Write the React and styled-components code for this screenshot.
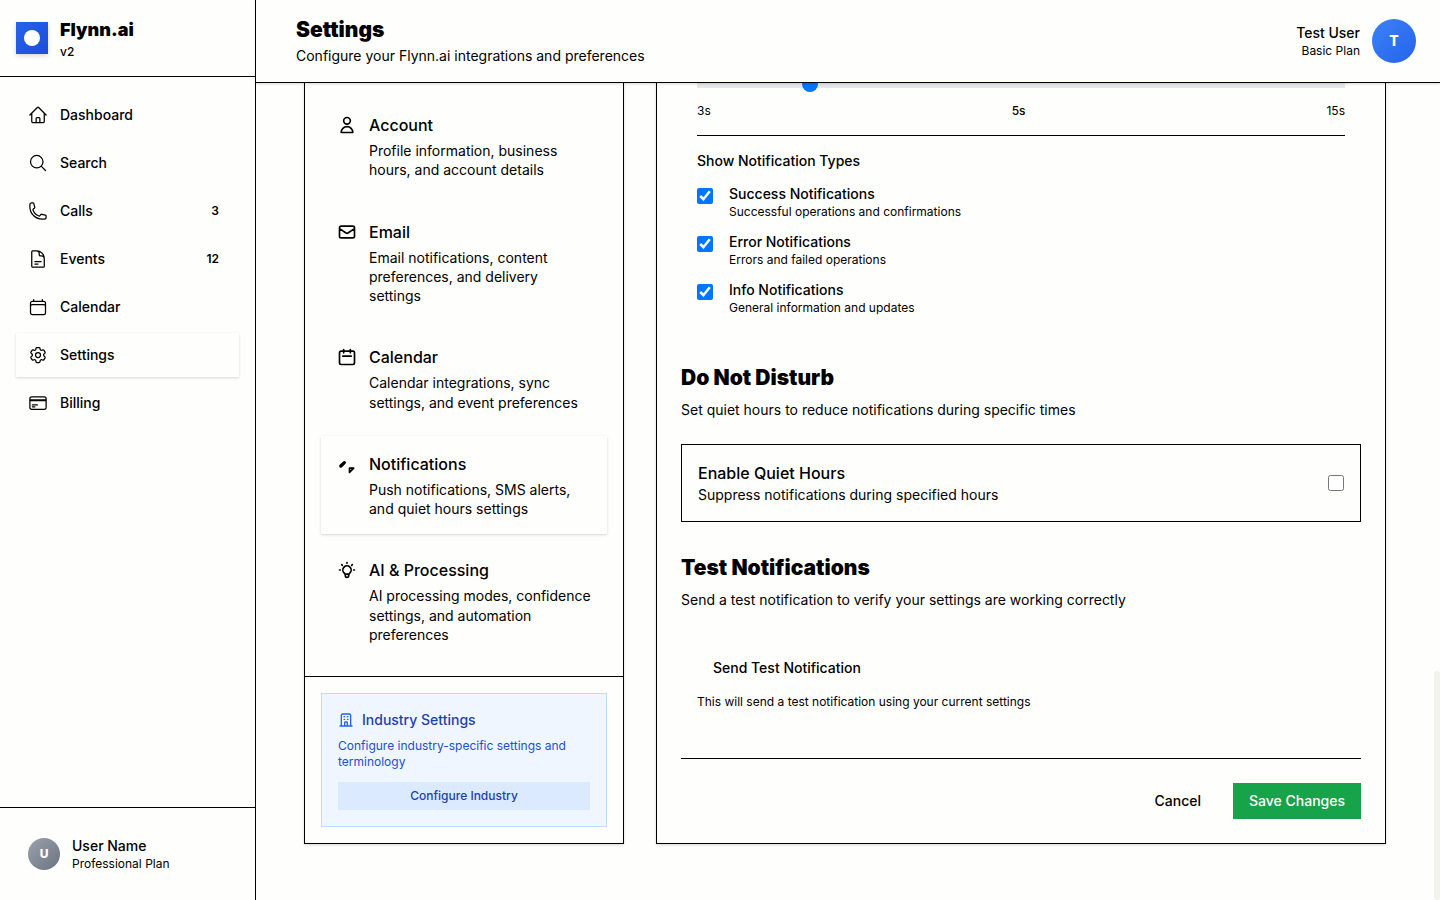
import React from 'react';
import styled, { createGlobalStyle, css } from 'styled-components';
import {
  HiOutlineHome,
  HiOutlineMagnifyingGlass,
  HiOutlinePhone,
  HiOutlineDocumentText,
  HiOutlineCalendar,
  HiOutlineCog6Tooth,
  HiOutlineCreditCard,
} from 'react-icons/hi2';

const GlobalStyle = createGlobalStyle`
  *, *::before, *::after { box-sizing: border-box; }
  body {
    margin: 0;
    background: #fefefc;
    color: #000;
    font-family: Inter, "Liberation Sans", sans-serif;
    font-size: 14px;
    line-height: 20px;
    -webkit-font-smoothing: antialiased;
  }
  h1, h2, h3, p, ul { margin: 0; padding: 0; }
  ul { list-style: none; }
  button { font: inherit; color: inherit; border: 0; background: none; cursor: pointer; }
  a { color: inherit; text-decoration: none; }
`;

const softShadow = css`
  box-shadow: 0 1px 3px rgba(0, 0, 0, 0.1), 0 1px 2px rgba(0, 0, 0, 0.06);
`;

const Shell = styled.div`
  display: flex;
  height: 100vh;
  overflow: hidden;
`;

const Sidebar = styled.aside`
  display: flex;
  flex-direction: column;
  flex: none;
  width: 256px;
  border-right: 1px solid #000;
`;

const Brand = styled.div`
  display: flex;
  align-items: center;
  gap: 12px;
  padding: 16px;
  border-bottom: 1px solid #000;
`;

const Logo = styled.div`
  display: grid;
  place-items: center;
  width: 32px;
  height: 32px;
  background: linear-gradient(135deg, #2563eb, #1d4ed8);
  box-shadow: 0 2px 5px rgba(0, 0, 0, 0.15);

  &::after {
    content: '';
    width: 16px;
    height: 16px;
    border-radius: 50%;
    background: #fff;
  }
`;

const Heading = styled.h2`
  font-size: 21px;
  line-height: 28px;
  font-weight: 900;
`;

const BrandName = styled.div`
  font-size: 18px;
  line-height: 28px;
  font-weight: 900;
`;

const Version = styled.div`
  font-size: 12px;
  line-height: 16px;
  font-weight: 500;
`;

const MainNav = styled.nav`
  flex: 1;
  padding: 16px;

  ul {
    display: flex;
    flex-direction: column;
    gap: 4px;
  }
`;

const NavLink = styled.a`
  display: flex;
  align-items: center;
  gap: 12px;
  height: 44px;
  padding: 0 12px;
  font-weight: 500;
  ${(p) => p.$active && softShadow}

  svg {
    width: 20px;
    height: 20px;
  }
`;

const Count = styled.span`
  margin-left: auto;
  padding: 0 8px;
  font-size: 12px;
  line-height: 16px;
  font-weight: 600;
`;

const SidebarFooter = styled.div`
  padding: 16px;
  border-top: 1px solid #000;
`;

const Profile = styled.div`
  display: flex;
  align-items: center;
  gap: 12px;
  padding: ${(p) => (p.$end ? '0' : '12px')};
  text-align: ${(p) => (p.$end ? 'right' : 'left')};
`;

const Avatar = styled.div`
  display: grid;
  place-items: center;
  flex: none;
  width: ${(p) => p.$size}px;
  height: ${(p) => p.$size}px;
  border-radius: 50%;
  background: ${(p) => p.$fill};
  color: #fff;
  font-size: ${(p) => p.$text}px;
  font-weight: 800;
`;

const Strong = styled.div`
  font-weight: 500;
`;

const Small = styled.div`
  font-size: 12px;
  line-height: 16px;
`;

const Page = styled.div`
  display: flex;
  flex-direction: column;
  flex: 1;
  min-width: 0;
`;

const TopBar = styled.header`
  position: relative;
  z-index: 1;
  display: flex;
  align-items: center;
  justify-content: space-between;
  flex: none;
  padding: 16px 24px 16px 40px;
  background: #fefefc;
  border-bottom: 1px solid #000;
  ${softShadow}

  p { margin-top: 2px; }
`;

const Scroller = styled.div`
  display: flex;
  flex: 1;
  min-height: 0;
`;

const ScrollTrack = styled.div`
  display: flex;
  align-items: flex-end;
  flex: none;
  width: 6px;
`;

const ScrollThumb = styled.div`
  width: 100%;
  height: 28%;
  border-radius: 3px;
  background: #f3f3ed;
`;

const Content = styled.main`
  display: flex;
  align-items: flex-start;
  gap: 32px;
  flex: 1;
  min-width: 0;
  padding: 0 48px 56px;
`;

const Card = styled.section`
  border: 1px solid #000;
  border-top: 0;
  ${softShadow}
`;

const MenuCard = styled(Card)`
  flex: none;
  width: 320px;
`;

const Menu = styled.ul`
  display: flex;
  flex-direction: column;
  gap: 8px;
  padding: 14px 16px 16px;
`;

const LineIcon = styled.svg`
  flex: none;
  width: ${(p) => p.$size}px;
  height: ${(p) => p.$size}px;
  fill: none;
  stroke: currentColor;
  stroke-width: 2;
  stroke-linecap: round;
  stroke-linejoin: round;
`;

const MenuItem = styled.button`
  display: flex;
  align-items: flex-start;
  gap: 12px;
  width: 100%;
  padding: 16px;
  text-align: left;
  ${(p) => p.$active && softShadow}

  ${LineIcon} { margin-top: 2px; }
`;

const MenuTitle = styled.span`
  display: block;
  margin-bottom: 4px;
  font-size: 16px;
  line-height: 24px;
  font-weight: 500;
`;

const MenuText = styled.span`
  display: block;
  line-height: 1.375;
`;

const IndustryArea = styled.div`
  padding: 16px;
  border-top: 1px solid #000;
`;

const IndustryBox = styled.div`
  padding: 16px;
  border: 1px solid #bfdbfe;
  background: #eff6ff;
  color: #1d4ed8;
  font-size: 12px;
  line-height: 16px;
`;

const IndustryTitle = styled.h3`
  display: flex;
  align-items: center;
  gap: 8px;
  margin-bottom: 8px;
  color: #1e40af;
  font-size: 14px;
  line-height: 20px;
  font-weight: 500;

  ${LineIcon} { color: #2563eb; }
`;

const IndustryButton = styled.button`
  width: 100%;
  margin-top: 12px;
  padding: 6px 12px;
  background: #dbeafe;
  color: #1e40af;
  font-weight: 500;
`;

const FormCard = styled(Card)`
  flex: 1;
  min-width: 0;
  padding: 0 24px 24px;
`;

const DurationArea = styled.div`
  padding: 0 16px 16px;
`;

const Slider = styled.input`
  display: block;
  appearance: none;
  width: 100%;
  height: 8px;
  margin: -3px 0 0;
  background: #e5e7eb;

  &::-webkit-slider-thumb {
    appearance: none;
    width: 16px;
    height: 16px;
    border-radius: 50%;
    background: #0075ff;
  }
`;

const Scale = styled.div`
  display: flex;
  justify-content: space-between;
  padding: 15px 0 16px;
  border-bottom: 1px solid #000;
  font-size: 12px;
  line-height: 16px;

  output { font-weight: 500; }
`;

const Types = styled.fieldset`
  display: flex;
  flex-direction: column;
  gap: 12px;
  margin: 0;
  padding: 14px 0 0;
  border: 0;

  legend {
    float: left;
    padding: 0;
    line-height: 22px;
    font-weight: 500;
  }
`;

const CheckRow = styled.label`
  display: flex;
  align-items: flex-start;
  gap: 16px;
`;

const Checkbox = styled.input`
  flex: none;
  width: 16px;
  height: 16px;
  margin: ${(p) => (p.$top ? '4px 0 0' : '0')};
`;

const Section = styled.section`
  margin-top: 32px;

  > p { margin-top: 8px; }
`;

const QuietRow = styled.label`
  display: flex;
  align-items: center;
  justify-content: space-between;
  margin-top: 24px;
  padding: 16px;
  border: 1px solid #000;
`;

const QuietTitle = styled.div`
  font-size: 16px;
  line-height: 24px;
  font-weight: 500;
`;

const TestArea = styled.div`
  margin-top: 24px;
  padding: 16px;

  p {
    margin-top: 8px;
    font-size: 12px;
    line-height: 16px;
  }
`;

const Button = styled.button`
  display: block;
  padding: 8px 16px;
  font-weight: 500;
  ${(p) => p.$primary && css`
    background: #16a34a;
    color: #fff;
  `}
`;

const Actions = styled.div`
  display: flex;
  justify-content: flex-end;
  gap: 16px;
  margin-top: 32px;
  padding-top: 24px;
  border-top: 1px solid #000;
`;

const navItems = [
  { label: 'Dashboard', icon: HiOutlineHome },
  { label: 'Search', icon: HiOutlineMagnifyingGlass },
  { label: 'Calls', icon: HiOutlinePhone, count: 3 },
  { label: 'Events', icon: HiOutlineDocumentText, count: 12 },
  { label: 'Calendar', icon: HiOutlineCalendar },
  { label: 'Settings', icon: HiOutlineCog6Tooth, active: true },
  { label: 'Billing', icon: HiOutlineCreditCard },
];

const menuItems = [
  {
    title: 'Account',
    text: 'Profile information, business hours, and account details',
    icon: <path d="M16 7a4 4 0 11-8 0 4 4 0 018 0zM12 14a7 7 0 00-7 7h14a7 7 0 00-7-7z" />,
  },
  {
    title: 'Email',
    text: 'Email notifications, content preferences, and delivery settings',
    icon: <path d="M3 8l7.89 5.26a2 2 0 002.22 0L21 8M5 19h14a2 2 0 002-2V7a2 2 0 00-2-2H5a2 2 0 00-2 2v10a2 2 0 002 2z" />,
  },
  {
    title: 'Calendar',
    text: 'Calendar integrations, sync settings, and event preferences',
    icon: <path d="M8 7V3m8 4V3m-9 8h10M5 21h14a2 2 0 002-2V7a2 2 0 00-2-2H5a2 2 0 00-2 2v12a2 2 0 002 2z" />,
  },
  {
    title: 'Notifications',
    text: 'Push notifications, SMS alerts, and quiet hours settings',
    active: true,
    icon: (
      <>
        <path d="M15 17h5l-5 5v-5z" />
        <path d="M4.6 14.4L8.8 10.4" strokeWidth="4" />
      </>
    ),
  },
  {
    title: 'AI & Processing',
    text: 'AI processing modes, confidence settings, and automation preferences',
    icon: <path d="M9.663 17h4.673M12 3v1m6.364 1.636l-.707.707M21 12h-1M4 12H3m3.343-5.657l-.707-.707m2.828 9.9a5 5 0 117.072 0l-.548.547A3.374 3.374 0 0014 18.469V19a2 2 0 11-4 0v-.531c0-.895-.356-1.754-.988-2.386l-.548-.547z" />,
  },
];

const types = [
  ['Success Notifications', 'Successful operations and confirmations'],
  ['Error Notifications', 'Errors and failed operations'],
  ['Info Notifications', 'General information and updates'],
];

export default function App() {
  return (
    <Shell>
      <GlobalStyle />
      <Sidebar>
        <Brand>
          <Logo />
          <div>
            <BrandName>Flynn.ai</BrandName>
            <Version>v2</Version>
          </div>
        </Brand>
        <MainNav>
          <ul>
            {navItems.map(({ label, icon: Icon, count, active }) => (
              <li key={label}>
                <NavLink href="#" $active={active}>
                  <Icon />
                  {label}
                  {count && <Count>{count}</Count>}
                </NavLink>
              </li>
            ))}
          </ul>
        </MainNav>
        <SidebarFooter>
          <Profile>
            <Avatar $size={32} $text={12} $fill="linear-gradient(135deg, #9ca3af, #6b7280)">U</Avatar>
            <div>
              <Strong>User Name</Strong>
              <Small>Professional Plan</Small>
            </div>
          </Profile>
        </SidebarFooter>
      </Sidebar>

      <Page>
        <TopBar>
          <div>
            <Heading as="h1">Settings</Heading>
            <p>Configure your Flynn.ai integrations and preferences</p>
          </div>
          <Profile $end>
            <div>
              <Strong>Test User</Strong>
              <Small>Basic Plan</Small>
            </div>
            <Avatar $size={44} $text={14} $fill="linear-gradient(135deg, #3b82f6, #2563eb)">T</Avatar>
          </Profile>
        </TopBar>

        <Scroller>
          <Content>
            <MenuCard>
              <Menu>
                {menuItems.map((item) => (
                  <li key={item.title}>
                    <MenuItem type="button" $active={item.active}>
                      <LineIcon $size={20} viewBox="0 0 24 24" aria-hidden="true">{item.icon}</LineIcon>
                      <span>
                        <MenuTitle>{item.title}</MenuTitle>
                        <MenuText>{item.text}</MenuText>
                      </span>
                    </MenuItem>
                  </li>
                ))}
              </Menu>
              <IndustryArea>
                <IndustryBox>
                  <IndustryTitle>
                    <LineIcon $size={16} viewBox="0 0 24 24" aria-hidden="true">
                      <path d="M19 21V5a2 2 0 00-2-2H7a2 2 0 00-2 2v16m14 0h2m-2 0h-5m-9 0H3m2 0h5M9 7h1m-1 4h1m4-4h1m-1 4h1m-5 10v-5a1 1 0 011-1h2a1 1 0 011 1v5m-4 0h4" />
                    </LineIcon>
                    Industry Settings
                  </IndustryTitle>
                  <p>Configure industry-specific settings and terminology</p>
                  <IndustryButton type="button">Configure Industry</IndustryButton>
                </IndustryBox>
              </IndustryArea>
            </MenuCard>

            <FormCard>
              <DurationArea>
                <Slider type="range" min="3" max="15" defaultValue="5" aria-label="Notification duration in seconds" />
                <Scale>
                  <span>3s</span>
                  <output>5s</output>
                  <span>15s</span>
                </Scale>
                <Types>
                  <legend>Show Notification Types</legend>
                  {types.map(([title, text]) => (
                    <CheckRow key={title}>
                      <Checkbox type="checkbox" defaultChecked $top />
                      <div>
                        <Strong>{title}</Strong>
                        <Small>{text}</Small>
                      </div>
                    </CheckRow>
                  ))}
                </Types>
              </DurationArea>

              <Section>
                <Heading>Do Not Disturb</Heading>
                <p>Set quiet hours to reduce notifications during specific times</p>
                <QuietRow>
                  <div>
                    <QuietTitle>Enable Quiet Hours</QuietTitle>
                    <div>Suppress notifications during specified hours</div>
                  </div>
                  <Checkbox type="checkbox" />
                </QuietRow>
              </Section>

              <Section>
                <Heading>Test Notifications</Heading>
                <p>Send a test notification to verify your settings are working correctly</p>
                <TestArea>
                  <Button type="button">Send Test Notification</Button>
                  <p>This will send a test notification using your current settings</p>
                </TestArea>
              </Section>

              <Actions>
                <Button type="button">Cancel</Button>
                <Button type="submit" $primary>Save Changes</Button>
              </Actions>
            </FormCard>
          </Content>
          <ScrollTrack>
            <ScrollThumb />
          </ScrollTrack>
        </Scroller>
      </Page>
    </Shell>
  );
}
